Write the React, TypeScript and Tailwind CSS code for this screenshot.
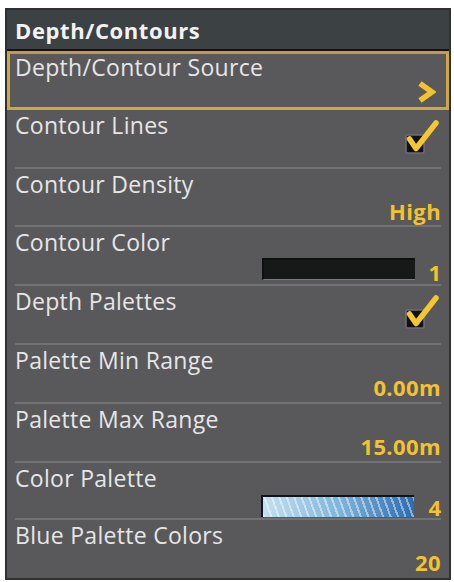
import React from "react";

const GOLD = "text-[#f2c230]";

function Check() {
  return (
    <svg width="34" height="36" viewBox="0 0 34 36" className="block">
      <rect x="1" y="16" width="18" height="18" rx="1.5" fill="#121212" stroke="#6f6a7c" strokeWidth="1.6" />
      <path d="M4.5 20 L11 29.5 L31 4" fill="none" stroke="#f4c630" strokeWidth="5.5" strokeLinecap="round" strokeLinejoin="round" />
    </svg>
  );
}

function Chevron() {
  return (
    <svg width="19" height="22" viewBox="0 0 19 22" className="block">
      <path d="M3 2.5 L15 11 L3 19.5" fill="none" stroke="#f2c230" strokeWidth="5.5" strokeLinejoin="miter" strokeLinecap="butt" />
    </svg>
  );
}

function Value({ text }: { text: string }) {
  return <span className={`mt-[31px] text-[22px] leading-none font-bold tracking-[0.4px] ${GOLD}`}>{text}</span>;
}

function Row({
  label,
  h,
  last,
  children,
}: {
  label: string;
  h: string;
  last?: boolean;
  children: React.ReactNode;
}) {
  return (
    <div className={`${h} px-[8px]`}>
      <div
        className={`h-full flex justify-between items-start ${last ? "" : "border-b-2 border-[#727273]"}`}
      >
        <span className="pt-[4px] text-[23px] leading-none tracking-[0.3px] text-[#e6e6e6]">{label}</span>
        {children}
      </div>
    </div>
  );
}

export default function App() {
  return (
    <div
      className="w-[454px] h-[582px] bg-white pt-[8px] pl-[5px]"
      style={{ fontFamily: '"Open Sans", "Noto Sans", sans-serif' }}
    >
      <div className="w-[446px] h-[572px] border-2 border-[#303031] bg-[#59595b] flex flex-col">
        <div className="h-[41px] shrink-0 bg-[#3c4143] border-b-2 border-[#141414] pl-[8px] pt-[9px]">
          <span className="text-[22px] leading-none font-bold tracking-[0.6px] text-[#f2f2f2]">Depth/Contours</span>
        </div>
        <div className="h-[59px] shrink-0 border-[3px] border-[#cfa640] border-t-[#c9944f] px-[5px] flex justify-between items-start">
          <span className="pt-[2px] text-[23px] leading-none tracking-[0.3px] text-[#e6e6e6]">Depth/Contour Source</span>
          <div className="mt-[27px] mr-[5px]">
            <Chevron />
          </div>
        </div>
        <Row label="Contour Lines" h="h-[59px]">
          <div className="mt-[9px] mr-[2px]">
            <Check />
          </div>
        </Row>
        <Row label="Contour Density" h="h-[58px]">
          <Value text="High" />
        </Row>
        <Row label="Contour Color" h="h-[59px]">
          <div className="mt-[31px] flex items-start">
            <div className="w-[153px] h-[22px] bg-[#161918] border-t-2 border-l-2 border-[#0e100f] border-b border-b-[#7b7d7c]" />
            <span className={`w-[26px] mt-[3px] text-right text-[22px] leading-none font-bold ${GOLD}`}>1</span>
          </div>
        </Row>
        <Row label="Depth Palettes" h="h-[59px]">
          <div className="mt-[8px] mr-[2px]">
            <Check />
          </div>
        </Row>
        <Row label="Palette Min Range" h="h-[59px]">
          <Value text="0.00m" />
        </Row>
        <Row label="Palette Max Range" h="h-[59px]">
          <Value text="15.00m" />
        </Row>
        <Row label="Color Palette" h="h-[57px]">
          <div className="mt-[32px] flex items-start">
            <div className="w-[153px] h-[22px] border-t-2 border-l-2 border-[#0d1620] bg-linear-to-r from-[#c4e0ef] via-[#7fb6dc] to-[#2c6cb0]">
              <div className="w-full h-full bg-[repeating-linear-gradient(70deg,rgba(255,255,255,0.45)_0px,rgba(255,255,255,0.45)_2px,rgba(255,255,255,0)_2px,rgba(255,255,255,0)_7px)]" />
            </div>
            <span className={`w-[27px] mt-[1px] text-right text-[22px] leading-none font-bold ${GOLD}`}>4</span>
          </div>
        </Row>
        <Row label="Blue Palette Colors" h="h-[58px]" last>
          <Value text="20" />
        </Row>
      </div>
    </div>
  );
}
